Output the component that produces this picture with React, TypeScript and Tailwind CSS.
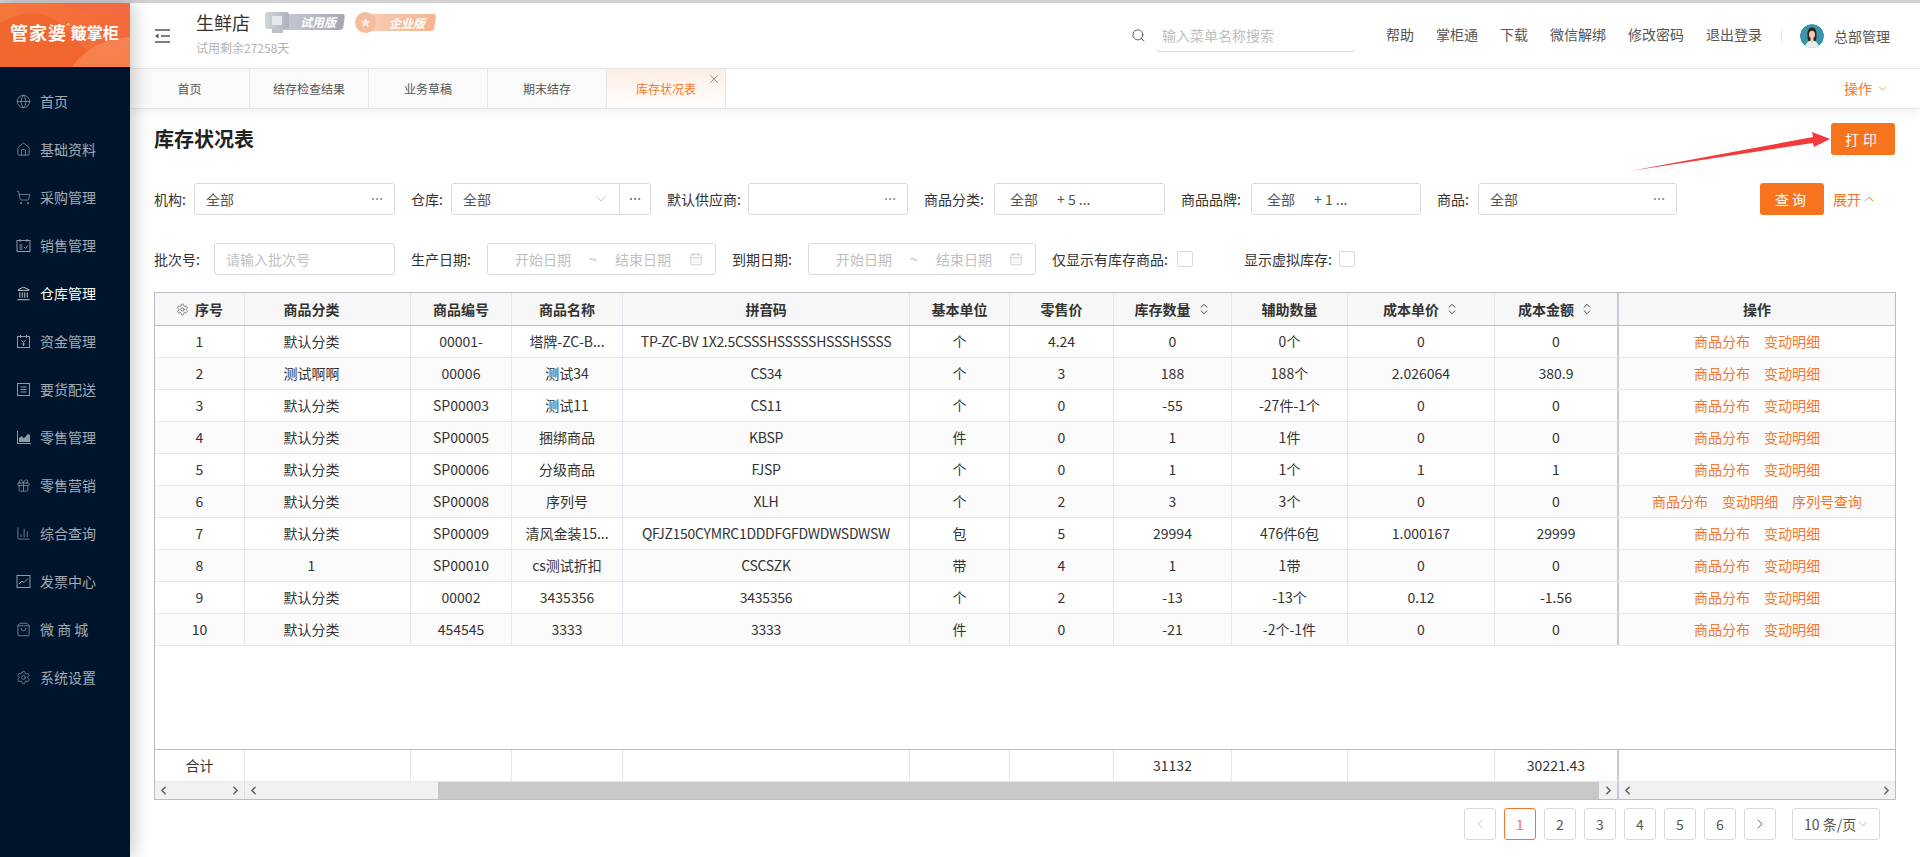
import {
  CalendarDays,
  ChartColumn,
  ChevronDown,
  ChevronLeft,
  ChevronRight,
  ChevronUp,
  ChevronsUpDown,
  Ellipsis,
  Gift,
  Globe,
  House,
  Landmark,
  Search,
  Settings,
  ShoppingBag,
  ShoppingCart,
  X,
} from 'lucide-react';
import type { ReactNode } from 'react';

const iconProps = { size: 15, strokeWidth: 1.2 };

const SalesIcon = () => (
  <svg width="15" height="15" viewBox="0 0 15 15" fill="none" stroke="currentColor" strokeWidth="1">
    <rect x="1" y="2.5" width="13" height="11" />
    <path d="M4 1v3M11 1v3M3.5 7h3M3.5 9h3M3.5 11h3M8 9l1.5 1.5L12 7.5" />
  </svg>
);

const FundIcon = () => (
  <svg width="15" height="15" viewBox="0 0 15 15" fill="none" stroke="currentColor" strokeWidth="1">
    <rect x="1.5" y="2.5" width="12" height="11" />
    <path d="M4.5 1v3M10.5 1v3M5.5 6l2 2.5L9.5 6M7.5 8.5V12M5.8 10h3.4" />
  </svg>
);

const ListIcon = () => (
  <svg width="15" height="15" viewBox="0 0 15 15" fill="none" stroke="currentColor" strokeWidth="1">
    <rect x="1.5" y="1.5" width="12" height="12" />
    <path d="M4.5 5h6M4.5 7.5h6M4.5 10h6" />
  </svg>
);

const AreaIcon = () => (
  <svg width="15" height="15" viewBox="0 0 15 15" fill="currentColor">
    <path d="M1 1h1v12h13v1H1z" />
    <path d="M3 12V8l2.5-2 2 2 2-1 2-3 2.500 1v7z" />
  </svg>
);

const InvoiceIcon = () => (
  <svg width="15" height="15" viewBox="0 0 15 15" fill="none" stroke="currentColor" strokeWidth="1">
    <rect x="1" y="1.500" width="13" height="12" />
    <path d="M3 10l3-3 2 1.500L12 4.500" />
  </svg>
);

const nav: { label: string; icon: ReactNode; active?: boolean }[] = [
  { label: '首页', icon: <Globe {...iconProps} /> },
  { label: '基础资料', icon: <House {...iconProps} /> },
  { label: '采购管理', icon: <ShoppingCart {...iconProps} /> },
  { label: '销售管理', icon: <SalesIcon /> },
  { label: '仓库管理', icon: <Landmark {...iconProps} />, active: true },
  { label: '资金管理', icon: <FundIcon /> },
  { label: '要货配送', icon: <ListIcon /> },
  { label: '零售管理', icon: <AreaIcon /> },
  { label: '零售营销', icon: <Gift {...iconProps} /> },
  { label: '综合查询', icon: <ChartColumn {...iconProps} /> },
  { label: '发票中心', icon: <InvoiceIcon /> },
  { label: '微 商 城', icon: <ShoppingBag {...iconProps} /> },
  { label: '系统设置', icon: <Settings {...iconProps} /> },
];

const links = ['帮助', '掌柜通', '下载', '微信解绑', '修改密码', '退出登录'];
const tabs = ['首页', '结存检查结果', '业务草稿', '期末结存'];

const gridCols =
  'grid grid-cols-[90px_166px_101px_111px_287px_100px_104px_118px_116px_147px_124px_276px]';

const headers: { label: string; sort?: boolean }[] = [
  { label: '序号' },
  { label: '商品分类' },
  { label: '商品编号' },
  { label: '商品名称' },
  { label: '拼音码' },
  { label: '基本单位' },
  { label: '零售价' },
  { label: '库存数量', sort: true },
  { label: '辅助数量' },
  { label: '成本单价', sort: true },
  { label: '成本金额', sort: true },
  { label: '操作' },
];

const rows = [
  ['1', '默认分类', '00001-', '塔牌-ZC-B...', 'TP-ZC-BV 1X2.5CSSSHSSSSSHSSSHSSSS', '个', '4.24', '0', '0个', '0', '0'],
  ['2', '测试啊啊', '00006', '测试34', 'CS34', '个', '3', '188', '188个', '2.026064', '380.9'],
  ['3', '默认分类', 'SP00003', '测试11', 'CS11', '个', '0', '-55', '-27件-1个', '0', '0'],
  ['4', '默认分类', 'SP00005', '捆绑商品', 'KBSP', '件', '0', '1', '1件', '0', '0'],
  ['5', '默认分类', 'SP00006', '分级商品', 'FJSP', '个', '0', '1', '1个', '1', '1'],
  ['6', '默认分类', 'SP00008', '序列号', 'XLH', '个', '2', '3', '3个', '0', '0'],
  ['7', '默认分类', 'SP00009', '清风金装15...', 'QFJZ150CYMRC1DDDFGFDWDWSDWSW', '包', '5', '29994', '476件6包', '1.000167', '29999'],
  ['8', '1', 'SP00010', 'cs测试折扣', 'CSCSZK', '带', '4', '1', '1带', '0', '0'],
  ['9', '默认分类', '00002', '3435356', '3435356', '个', '2', '-13', '-13个', '0.12', '-1.56'],
  ['10', '默认分类', '454545', '3333', '3333', '件', '0', '-21', '-2个-1件', '0', '0'],
];

const totals = ['合计', '', '', '', '', '', '', '31132', '', '', '30221.43', ''];

function Cell({ index, children }: { index: number; children?: ReactNode }) {
  // 成本金额 is the edge of the fixed right column, so its divider is heavier
  const divider =
    index === 11
      ? ''
      : index === 10
        ? 'border-r-2 border-[#c6cad4]'
        : 'border-r border-[#e4e7ee]';
  // the category column sits left of centre in the reference, pinyin runs narrow
  const extra = index === 1 ? 'pr-[32px]' : index === 4 ? 'tracking-[-0.3px]' : '';
  return (
    <div className={`flex min-w-0 items-center justify-center whitespace-nowrap ${divider} ${extra}`}>
      {children}
    </div>
  );
}

function Label({ width, children }: { width: string; children: ReactNode }) {
  return <span className={`shrink-0 text-[14px] text-[#333] ${width}`}>{children}:</span>;
}

function Box({ width, children }: { width: string; children?: ReactNode }) {
  return (
    <div
      className={`flex h-[32px] shrink-0 items-center rounded-[3px] border border-[#d9d9d9] bg-white text-[14px] text-[#555] ${width}`}
    >
      {children}
    </div>
  );
}

function DotsField({ width, value }: { width: string; value?: string }) {
  return (
    <Box width={width}>
      <span className="pl-[11px]">{value}</span>
      <Ellipsis size={14} strokeWidth={1.4} className="ml-auto mr-[10px] text-[#777]" />
    </Box>
  );
}

function TagField({ width, more }: { width: string; more: string }) {
  return (
    <Box width={width}>
      <span className="pl-[15px]">全部</span>
      <span className="ml-[19px]">{more}</span>
    </Box>
  );
}

function DateField({ width }: { width: string }) {
  return (
    <Box width={width}>
      <span className="pl-[27px] text-[#bfbfbf]">开始日期</span>
      <span className="w-[44px] text-center text-[#bfbfbf]">~</span>
      <span className="text-[#bfbfbf]">结束日期</span>
      <CalendarDays size={14} strokeWidth={1.2} className="ml-auto mr-[12px] text-[#bfbfbf]" />
    </Box>
  );
}

function TrialBadge() {
  return (
    <div className="relative h-[21px] w-[80px]">
      <div className="absolute bottom-[3px] left-[14px] right-[1px] top-[2px] flex -skew-x-[8deg] items-center justify-center rounded-[3px] bg-gradient-to-r from-[#c9ccd4] to-[#a3a8b4] pl-[14px]">
        <span className="skew-x-[8deg] text-[12px] font-bold italic text-white">试用版</span>
      </div>
      <div className="absolute left-0 top-0 flex h-[17px] w-[24px] items-center justify-center rounded-[3px] bg-gradient-to-r from-[#d2d4da] to-[#aeb2bc]">
        <div className="h-[9px] w-[10px] bg-[#e6e7ea]" />
      </div>
      <div className="absolute bottom-0 left-[7px] h-[4px] w-[11px] bg-[#bcbfc8]" />
    </div>
  );
}

function EnterpriseBadge() {
  return (
    <div className="relative h-[21px] w-[80px]">
      <div className="absolute bottom-[2px] left-[12px] right-0 top-[2px] flex -skew-x-[8deg] items-center justify-center rounded-[3px] bg-gradient-to-r from-[#f7cdb4] to-[#f4b48e] pl-[12px]">
        <span className="skew-x-[8deg] text-[12px] font-bold italic text-white">企业版</span>
      </div>
      <div className="absolute left-0 top-0 flex h-[21px] w-[21px] items-center justify-center rounded-full bg-[#f5bd9c]">
        <svg width="11" height="11" viewBox="0 0 24 24" fill="#fbe6da">
          <path d="M12 1l3.400 7.300 7.600.9-5.600 5.400 1.500 7.900L12 18.600 5.100 22.500l1.500-7.900L1 9.200l7.600-.9z" />
        </svg>
      </div>
    </div>
  );
}

function Avatar() {
  return (
    <svg width="24" height="24" viewBox="0 0 24 24" className="shrink-0 rounded-full">
      <circle cx="12" cy="12" r="12" fill="#3d95a8" />
      <path d="M7.500 12C7 6 9 3.500 12 3.500S17 6 16.500 12c0 3-.5 5-1.500 5H9c-1 0-1.500-2-1.500-5z" fill="#2c2420" />
      <ellipse cx="12" cy="10.500" rx="3" ry="3.800" fill="#f0c8ae" />
      <path d="M5 24c.5-5 3.500-7.500 7-7.500s6.500 2.500 7 7.500z" fill="#e3f0f2" />
      <path d="M10.500 14h3v3.500L12 19l-1.500-1.500z" fill="#f0c8ae" />
    </svg>
  );
}

export default function App() {
  return (
    <div className="flex h-[857px] w-[1920px] flex-col overflow-hidden bg-white text-[14px] text-[#333] [font-family:'Noto_Sans_CJK_SC','Liberation_Sans',sans-serif]">
      <div className="h-[3px] shrink-0 bg-[#d2d2d2]" />
      <div className="flex min-h-0 flex-1">
        <aside className="relative z-10 flex w-[130px] shrink-0 flex-col bg-[#00152b] shadow-[3px_0_18px_rgba(0,0,0,0.22)]">
          <div className="relative h-[64px] shrink-0 overflow-hidden bg-gradient-to-r from-[#f5763a] to-[#f4693a]">
            <svg viewBox="0 0 130 64" preserveAspectRatio="none" className="absolute inset-0 h-full w-full">
              <path d="M0 20C30 4 52 8 70 30S110 62 130 46V64H0z" fill="#f0622a" opacity="0.7" />
              <path d="M72 64c14-20 34-28 58-30v30z" fill="#f88a58" opacity="0.75" />
              <path d="M60 0c20 10 44 14 70 8V0z" fill="#f1694a" opacity="0.6" />
            </svg>
            <div className="relative flex h-full items-center pb-[6px] pl-[10px] text-white">
              <span className="text-[18px] font-bold leading-none tracking-[1px]">管家婆</span>
              <span className="mb-[12px] text-[6px] leading-none">®</span>
              <span className="ml-[1px] text-[16px] font-bold leading-none">簸掌柜</span>
            </div>
          </div>
          <nav className="mt-[10px] flex flex-col">
            {nav.map((item) => (
              <div
                key={item.label}
                className={`flex h-[48px] items-center gap-[9px] pl-[16px] text-[14px] ${
                  item.active ? 'text-white' : 'text-[#a4abb3]'
                }`}
              >
                <span className={`flex w-[15px] justify-center ${item.active ? 'text-white' : 'text-[#8f99a3]'}`}>
                  {item.icon}
                </span>
                <span className="whitespace-pre">{item.label}</span>
              </div>
            ))}
          </nav>
        </aside>

        <main className="flex min-w-0 flex-1 flex-col">
          <header className="flex h-[65px] shrink-0 items-center">
            <svg width="15" height="14" viewBox="0 0 15 14" fill="none" stroke="#555" strokeWidth="1.400" className="ml-[25px] shrink-0">
              <path d="M0 1h15M6 7h9M0 13h15" />
              <path d="M0 7l3.500-2.500v5z" fill="#555" stroke="none" />
            </svg>
            <div className="mb-[5px] ml-[26px] flex flex-col">
              <div className="flex items-center">
                <span className="text-[18px] leading-[24px] text-[#333]">生鲜店</span>
                <div className="ml-[15px] flex gap-[10px]">
                  <TrialBadge />
                  <EnterpriseBadge />
                </div>
              </div>
              <span className="mt-[6px] text-[12px] leading-[16px] text-[#b3b3b3]">试用剩余27258天</span>
            </div>
            <div className="ml-auto flex items-center pr-[30px]">
              <Search size={15} strokeWidth={1.500} className="text-[#555]" />
              <div className="ml-[9px] h-[32px] w-[200px] rounded-b-[4px] border-b border-[#d9d9d9] pl-[7px] text-[14px] leading-[30px] text-[#bdbdbd]">
                输入菜单名称搜索
              </div>
              <div className="mb-[2px] ml-[31px] flex gap-[22px] text-[#555]">
                {links.map((link) => (
                  <span key={link}>{link}</span>
                ))}
              </div>
              <div className="ml-[19px] h-[14px] w-px bg-[#e6e6e6]" />
              <div className="ml-[18px] mt-[1px] flex items-center gap-[10px] text-[#555]">
                <Avatar />
                <span>总部管理</span>
              </div>
            </div>
          </header>

          <div className="relative z-[1] flex h-[41px] shrink-0 items-stretch border-y border-[#e6e6e6] bg-white shadow-[0_4px_8px_rgba(0,0,0,0.05)]">
            {tabs.map((tab, i) => (
              <div
                key={tab}
                className={`flex items-center justify-center border-r border-[#e6e6e6] bg-[#fafafa] text-[12px] text-[#555] ${
                  i === 0 ? 'w-[120px]' : 'w-[119px]'
                }`}
              >
                {tab}
              </div>
            ))}
            <div className="relative flex w-[119px] items-center justify-center border-r border-[#e6e6e6] bg-gradient-to-b from-[#fdeee4] to-white text-[12px] text-[#f5762a]">
              库存状况表
              <X size={14} strokeWidth={1.300} className="absolute right-[4px] top-[3px] text-[#777]" />
            </div>
            <div className="ml-auto flex items-center gap-[4px] pr-[31px] text-[14px] text-[#f5762a]">
              操作
              <ChevronDown size={13} strokeWidth={1.300} />
            </div>
          </div>

          <section className="relative min-h-0 flex-1">
            <svg width="210" height="47" viewBox="0 0 210 47" className="absolute left-[1495px] top-[18px] z-[2]">
              <polygon points="5,44 188,10 187,5 205,12 189,20 188,16" fill="#f5383b" />
            </svg>

            <div className="flex items-center pl-[24px] pr-[25px] pt-[14px]">
              <h1 className="text-[20px] font-bold text-[#222]">库存状况表</h1>
              <button className="ml-auto h-[32px] w-[64px] rounded-[3px] bg-[#f7741f] text-[14px] tracking-[4px] text-white">
                打印
              </button>
            </div>

            <div className="mt-[28px] flex items-center pl-[24px]">
              <Label width="w-[40px]">机构</Label>
              <DotsField width="w-[201px]" value="全部" />
              <div className="ml-[16px] flex items-center">
                <Label width="w-[40px]">仓库</Label>
                <Box width="w-[200px]">
                  <span className="pl-[11px]">全部</span>
                  <ChevronDown size={16} strokeWidth={1} className="ml-auto mr-[10px] text-[#aaa]" />
                  <span className="flex h-full w-[31px] items-center justify-center border-l border-[#d9d9d9]">
                    <Ellipsis size={14} strokeWidth={1.400} className="text-[#555]" />
                  </span>
                </Box>
              </div>
              <div className="ml-[16px] flex items-center">
                <Label width="w-[81px]">默认供应商</Label>
                <DotsField width="w-[160px]" />
              </div>
              <div className="ml-[16px] flex items-center">
                <Label width="w-[70px]">商品分类</Label>
                <TagField width="w-[171px]" more="+ 5 ..." />
              </div>
              <div className="ml-[16px] flex items-center">
                <Label width="w-[70px]">商品品牌</Label>
                <TagField width="w-[170px]" more="+ 1 ..." />
              </div>
              <div className="ml-[16px] flex items-center">
                <Label width="w-[41px]">商品</Label>
                <DotsField width="w-[199px]" value="全部" />
              </div>
              <button className="ml-[83px] h-[32px] w-[64px] rounded-[3px] bg-[#f7741f] text-[14px] tracking-[3px] text-white">
                查询
              </button>
              <span className="ml-[9px] flex items-center text-[14px] text-[#f5762a]">
                展开
                <ChevronUp size={16} strokeWidth={1.200} />
              </span>
            </div>

            <div className="mt-[28px] flex items-center pl-[24px]">
              <Label width="w-[60px]">批次号</Label>
              <Box width="w-[181px]">
                <span className="pl-[11px] text-[#bfbfbf]">请输入批次号</span>
              </Box>
              <div className="ml-[16px] flex items-center">
                <Label width="w-[76px]">生产日期</Label>
                <DateField width="w-[229px]" />
              </div>
              <div className="ml-[16px] flex items-center">
                <Label width="w-[76px]">到期日期</Label>
                <DateField width="w-[228px]" />
              </div>
              <div className="ml-[16px] flex items-center">
                <Label width="w-[125px]">仅显示有库存商品</Label>
                <span className="h-[16px] w-[16px] rounded-[2px] border border-[#d9d9d9]" />
              </div>
              <div className="ml-[51px] flex items-center">
                <Label width="w-[95px]">显示虚拟库存</Label>
                <span className="h-[16px] w-[16px] rounded-[2px] border border-[#d9d9d9]" />
              </div>
            </div>

            <div className="ml-[24px] mt-[17px] w-[1742px] border border-[#b9bdc8]">
              <div className={`${gridCols} h-[33px] border-b border-[#b9bdc8] bg-[#f7f7f7] font-bold`}>
                {headers.map((h, i) => (
                  <Cell key={h.label} index={i}>
                    {i === 0 && <Settings size={13} strokeWidth={1.300} className="mr-[6px] text-[#555]" />}
                    {h.label}
                    {h.sort && <ChevronsUpDown size={14} strokeWidth={1.500} className="ml-[6px] text-[#333]" />}
                  </Cell>
                ))}
              </div>

              {rows.map((row, r) => (
                <div key={row[0]} className={`${gridCols} h-[32px] border-b border-[#e4e7ee] ${r % 2 === 1 ? 'bg-[#fbfbfb]' : 'bg-white'}`}>
                  {row.map((value, i) => (
                    <Cell key={i} index={i}>
                      {value}
                    </Cell>
                  ))}
                  <Cell index={11}>
                    <span className="flex gap-[14px] text-[#f5762a]">
                      <span>商品分布</span>
                      <span>变动明细</span>
                      {row[0] === '6' && <span>序列号查询</span>}
                    </span>
                  </Cell>
                </div>
              ))}

              <div className="h-[103px]" />

              <div className={`${gridCols} h-[32px] border-t border-[#b9bdc8]`}>
                {totals.map((value, i) => (
                  <Cell key={i} index={i}>
                    {value}
                  </Cell>
                ))}
              </div>

              <div className="flex h-[18px] border-t border-[#e4e7ee] bg-[#f1f1f1] text-[#666]">
                <div className="flex w-[90px] items-center justify-between border-r border-[#dcdfe6] px-[2px]">
                  <ChevronLeft size={13} strokeWidth={3} />
                  <ChevronRight size={13} strokeWidth={3} />
                </div>
                <div className="flex min-w-0 flex-1 items-center border-r-2 border-[#c6cad4]">
                  <ChevronLeft size={13} strokeWidth={3} className="mx-[2px] shrink-0" />
                  <div className="ml-[176px] h-full w-[1161px] shrink-0 bg-[#c8c8c8]" />
                  <ChevronRight size={13} strokeWidth={3} className="ml-auto mr-[2px] shrink-0" />
                </div>
                <div className="flex w-[276px] items-center justify-between px-[2px]">
                  <ChevronLeft size={13} strokeWidth={3} />
                  <ChevronRight size={13} strokeWidth={3} />
                </div>
              </div>
            </div>

            <div className="mt-[8px] flex items-center justify-end gap-[8px] pr-[40px] text-[14px] text-[#555]">
              <span className="flex h-[32px] w-[32px] items-center justify-center rounded-[3px] border border-[#d9d9d9] text-[#bbb]">
                <ChevronLeft size={16} strokeWidth={1.200} />
              </span>
              {['1', '2', '3', '4', '5', '6'].map((p) => (
                <span
                  key={p}
                  className={`flex h-[32px] w-[32px] items-center justify-center rounded-[3px] border ${
                    p === '1' ? 'border-[#f5762a] text-[#f5762a]' : 'border-[#d9d9d9]'
                  }`}
                >
                  {p}
                </span>
              ))}
              <span className="flex h-[32px] w-[32px] items-center justify-center rounded-[3px] border border-[#d9d9d9]">
                <ChevronRight size={16} strokeWidth={1.200} />
              </span>
              <span className="ml-[8px] flex h-[32px] w-[88px] items-center whitespace-nowrap rounded-[3px] border border-[#d9d9d9] pl-[11px]">
                10 条/页
                <ChevronDown size={14} strokeWidth={1.200} className="shrink-0 text-[#999]" />
              </span>
            </div>
          </section>
        </main>
      </div>
    </div>
  );
}
